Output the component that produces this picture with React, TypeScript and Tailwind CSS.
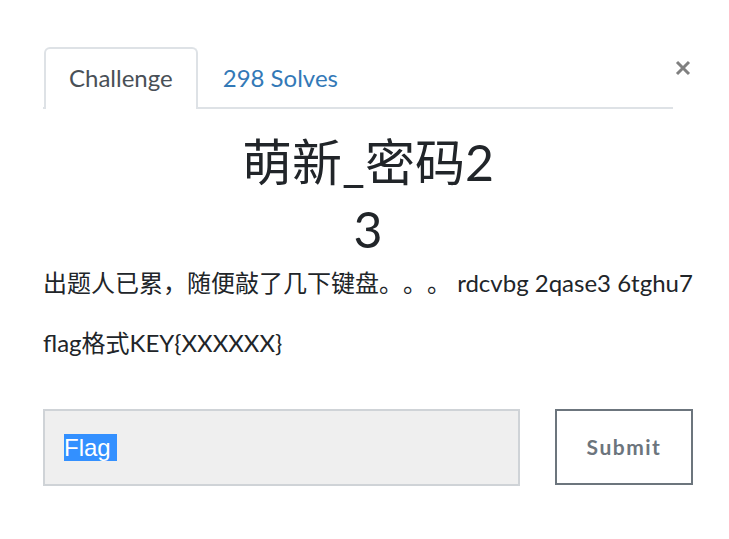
import React from "react";

export default function App() {
  return (
    <div className="w-[729px] h-[539px] bg-white overflow-hidden [font-family:Lato,'Noto_Sans_CJK_SC',sans-serif] [text-spacing-trim:space-all]">
      <div className="pl-[43px] pr-[36px] pt-[47px]">
        {/* header: tabs + close */}
        <div className="flex items-start">
          <div className="flex-1 flex border-b-2 border-[#dee2e6] pl-[1px]">
            <div className="-mb-[2px] border-2 border-b-0 border-[#dee2e6] rounded-t-[6px] bg-white px-[23px] pt-[11px] pb-[13px] text-[24px] leading-[36px] text-[#495057]">
              Challenge
            </div>
            <div className="px-[25px] pt-[13px] pb-[11px] text-[24px] leading-[36px] text-[#3379b7]">
              298 Solves
            </div>
          </div>
          <button className="w-[20px] flex justify-center pt-[13px]">
            <svg width="16" height="16" viewBox="0 0 16 16">
              <path d="M2 2 L14 14 M14 2 L2 14" stroke="#808080" strokeWidth="3" />
            </svg>
          </button>
        </div>

        {/* title */}
        <h3 className="mt-[20px] text-center text-[50px] leading-[67px] text-[#212529]">
          <div>萌新_密码2</div>
          <div>3</div>
        </h3>

        {/* description */}
        <div className="mt-[2px] text-[24px] leading-[36px] text-[#212529]">
          <p className="mb-[24px] whitespace-nowrap">出题人已累，随便敲了几下键盘。。。 rdcvbg 2qase3 6tghu7</p>
          <p>flag格式KEY{"{"}XXXXXX{"}"}</p>
        </div>

        {/* form */}
        <div className="mt-[48px] flex items-start">
          <div className="w-[477px] h-[77px] border-2 border-[#cfd3d7] bg-[#efefef] flex items-center pl-[19px]">
            <span className="bg-[#3390ff] text-white text-[24px] leading-[27px] [font-family:'Liberation_Sans',Arial,sans-serif]">
              Flag&nbsp;
            </span>
          </div>
          <button className="ml-auto w-[138px] h-[76px] border-2 border-[#6c757d] flex items-center justify-center text-[21px] font-bold tracking-[1.5px] text-[#6c757d]">
            Submit
          </button>
        </div>
      </div>
    </div>
  );
}
